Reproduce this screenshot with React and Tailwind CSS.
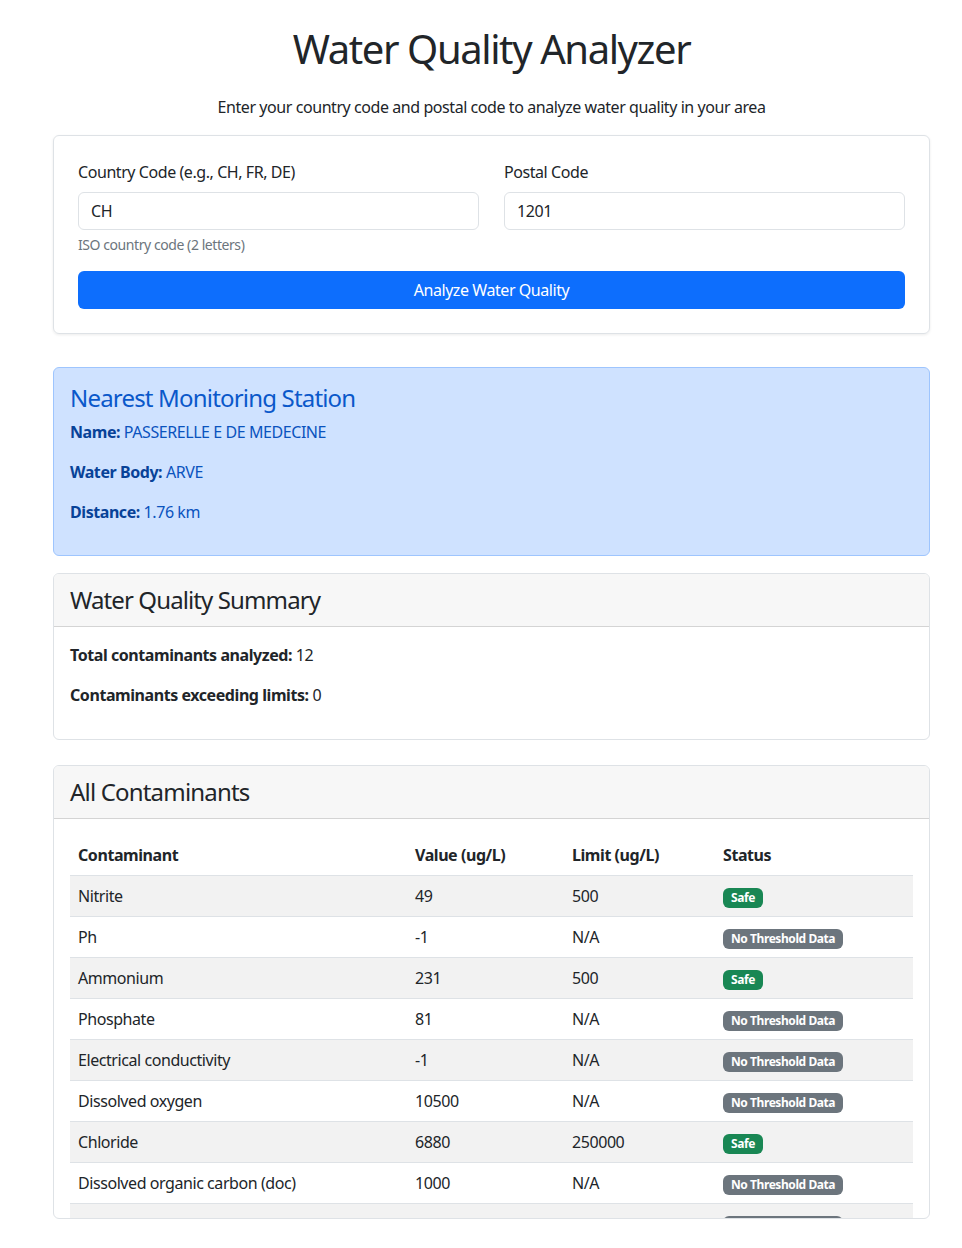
import React from 'react';

const contaminants = [
  { name: 'Nitrite', value: '49', limit: '500', status: 'safe' },
  { name: 'Ph', value: '-1', limit: 'N/A', status: 'none' },
  { name: 'Ammonium', value: '231', limit: '500', status: 'safe' },
  { name: 'Phosphate', value: '81', limit: 'N/A', status: 'none' },
  { name: 'Electrical conductivity', value: '-1', limit: 'N/A', status: 'none' },
  { name: 'Dissolved oxygen', value: '10500', limit: 'N/A', status: 'none' },
  { name: 'Chloride', value: '6880', limit: '250000', status: 'safe' },
  { name: 'Dissolved organic carbon (doc)', value: '1000', limit: 'N/A', status: 'none' },
  { name: 'Nitrate', value: '1200', limit: '50000', status: 'none' },
  { name: 'Sulfate', value: '9100', limit: '250000', status: 'safe' },
];

const StatusBadge = ({ status }) => {
  if (status === 'safe') {
    return (
      <span className="inline-block rounded-[6px] bg-[#198754] px-[8px] py-[3px] text-[12px] font-bold leading-[14px] text-white">
        Safe
      </span>
    );
  }
  return (
    <span className="inline-block rounded-[6px] bg-[#6c757d] px-[8px] py-[3px] text-[12px] font-bold leading-[14px] text-white">
      No Threshold Data
    </span>
  );
};

const App = () => {
  return (
    <div className="min-h-[1248px] bg-white text-[#212529] font-['Noto_Sans',sans-serif] text-[16px] leading-[24px] tracking-[-0.027em]">
      <div className="ml-[53px] w-[877px] pt-[25px]">
        <h1 className="text-center text-[40px] leading-[48px] font-normal tracking-[-0.035em]">Water Quality Analyzer</h1>
        <p className="mt-[22px] text-center">
          Enter your country code and postal code to analyze water quality in your area
        </p>

        {/* Search form */}
        <div className="mt-[16px] rounded-[6px] border border-[#dee2e6] p-[24px] shadow-[0_1px_3px_rgba(0,0,0,0.08)]">
          <div className="grid grid-cols-2 gap-[25px]">
            <div>
              <label className="mb-[8px] block">Country Code (e.g., CH, FR, DE)</label>
              <input
                className="block h-[38px] w-full rounded-[6px] border border-[#dee2e6] px-[12px] outline-none"
                defaultValue="CH"
              />
              <div className="mt-[4px] text-[14px] leading-[21px] text-[#6c757d]">ISO country code (2 letters)</div>
            </div>
            <div>
              <label className="mb-[8px] block">Postal Code</label>
              <input
                className="block h-[38px] w-full rounded-[6px] border border-[#dee2e6] px-[12px] outline-none"
                defaultValue="1201"
              />
            </div>
          </div>
          <button className="mt-[16px] h-[38px] w-full rounded-[6px] bg-[#0d6efd] text-white">
            Analyze Water Quality
          </button>
        </div>

        {/* Station */}
        <div className="mt-[33px] rounded-[6px] border border-[#9ec5fe] bg-[#cfe2ff] px-[16px] pt-[16px] pb-[15px] text-[#0a53be]">
          <h4 className="mb-[8px] text-[24px] leading-[28px] tracking-[-0.034em] text-[#0a58ca]">Nearest Monitoring Station</h4>
          <p className="mb-[16px]"><strong className="font-bold text-[#084298]">Name:</strong> PASSERELLE E DE MEDECINE</p>
          <p className="mb-[16px]"><strong className="font-bold text-[#084298]">Water Body:</strong> ARVE</p>
          <p className="mb-[16px]"><strong className="font-bold text-[#084298]">Distance:</strong> 1.76 km</p>
        </div>

        {/* Summary */}
        <div className="mt-[17px] overflow-hidden rounded-[6px] border border-[#dee2e6]">
          <div className="border-b border-[#d4d4d4] bg-[#f7f7f7] px-[16px] py-[12px]">
            <h4 className="text-[24px] leading-[28px] tracking-[-0.037em]">Water Quality Summary</h4>
          </div>
          <div className="p-[16px]">
            <p className="mb-[16px]"><strong className="font-bold">Total contaminants analyzed:</strong> 12</p>
            <p className="mb-[16px]"><strong className="font-bold">Contaminants exceeding limits:</strong> 0</p>
          </div>
        </div>

        {/* All contaminants */}
        <div className="mt-[25px] overflow-hidden rounded-[6px] border border-[#dee2e6]">
          <div className="border-b border-[#d4d4d4] bg-[#f7f7f7] px-[16px] py-[12px]">
            <h4 className="text-[24px] leading-[28px] tracking-[-0.034em]">All Contaminants</h4>
          </div>
          <div className="h-[399px] overflow-hidden px-[16px] pt-[16px]">
            <table className="w-full border-collapse text-left">
              <thead>
                <tr className="border-b border-[#dee2e6]">
                  <th className="w-[337px] px-[8px] py-[8px] font-bold">Contaminant</th>
                  <th className="w-[157px] px-[8px] py-[8px] font-bold">Value (ug/L)</th>
                  <th className="w-[151px] px-[8px] py-[8px] font-bold">Limit (ug/L)</th>
                  <th className="px-[8px] py-[8px] font-bold">Status</th>
                </tr>
              </thead>
              <tbody>
                {contaminants.map((c, i) => (
                  <tr key={c.name} className={`border-b border-[#dee2e6] ${i % 2 === 0 ? 'bg-[#f2f2f2]' : 'bg-white'}`}>
                    <td className="px-[8px] py-[8px]">{c.name}</td>
                    <td className="px-[8px] py-[8px]">{c.value}</td>
                    <td className="px-[8px] py-[8px]">{c.limit}</td>
                    <td className="px-[8px] py-[8px]"><StatusBadge status={c.status} /></td>
                  </tr>
                ))}
              </tbody>
            </table>
          </div>
        </div>
      </div>
    </div>
  );
};

export default App;
